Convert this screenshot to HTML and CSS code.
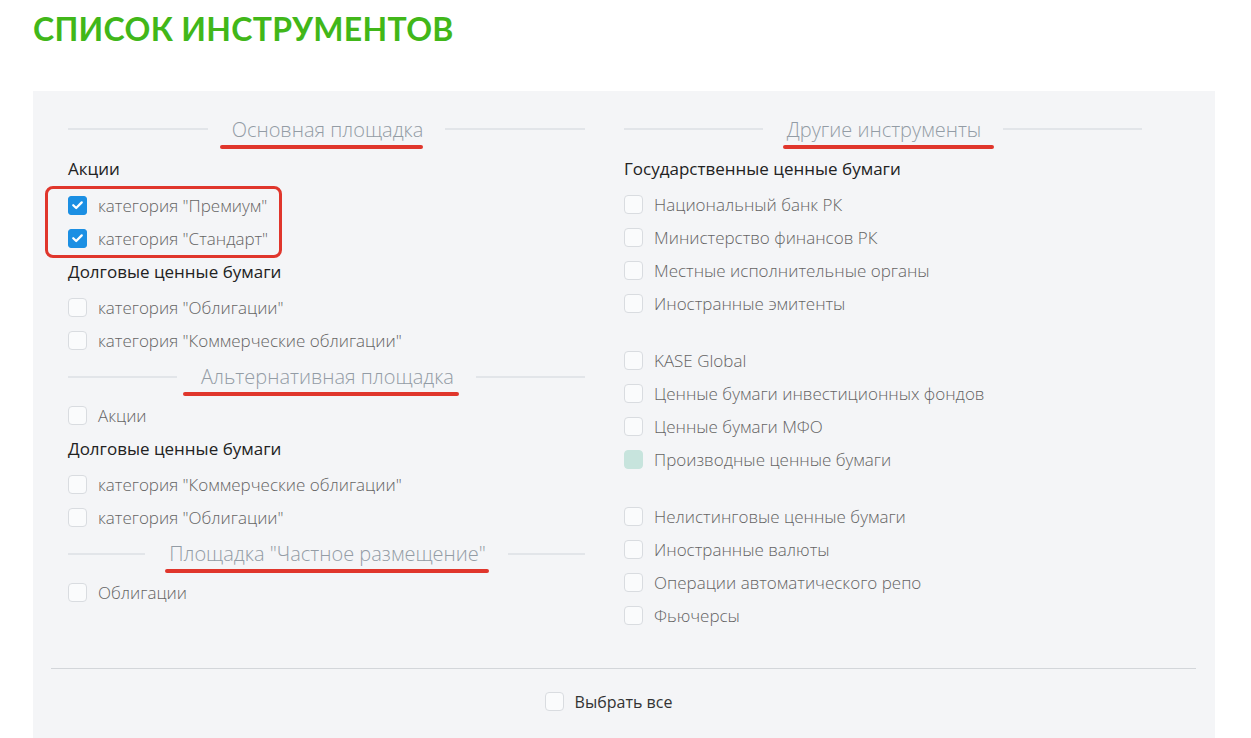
FILE: index.html
```html
<!DOCTYPE html>
<html lang="ru">
<head>
<meta charset="utf-8">
<title>Список инструментов</title>
<link rel="stylesheet" href="styles.css">
</head>
<body>
<h1 class="title">СПИСОК ИНСТРУМЕНТОВ</h1>
<div class="panel">
  <div class="columns">
    <div class="col">
      <div class="heading"><span class="line"></span><span class="htext mark-a">Основная площадка</span><span class="line"></span></div>
      <div class="label">Акции</div>
      <div class="redbox">
        <label class="item"><span class="box checked"><svg viewBox="0 0 18 18" width="18" height="18"><path d="M4.5 9.3 L7.6 12.2 L13.5 6.2" fill="none" stroke="#fff" stroke-width="2.4" stroke-linecap="round" stroke-linejoin="round"/></svg></span>категория "Премиум"</label>
        <label class="item"><span class="box checked"><svg viewBox="0 0 18 18" width="18" height="18"><path d="M4.5 9.3 L7.6 12.2 L13.5 6.2" fill="none" stroke="#fff" stroke-width="2.4" stroke-linecap="round" stroke-linejoin="round"/></svg></span>категория "Стандарт"</label>
      </div>
      <div class="label">Долговые ценные бумаги</div>
      <label class="item"><span class="box"></span>категория "Облигации"</label>
      <label class="item"><span class="box"></span>категория "Коммерческие облигации"</label>
      <div class="heading"><span class="line"></span><span class="htext mark-b">Альтернативная площадка</span><span class="line"></span></div>
      <label class="item"><span class="box"></span>Акции</label>
      <div class="label">Долговые ценные бумаги</div>
      <label class="item"><span class="box"></span>категория "Коммерческие облигации"</label>
      <label class="item"><span class="box"></span>категория "Облигации"</label>
      <div class="heading"><span class="line"></span><span class="htext mark-c">Площадка "Частное размещение"</span><span class="line"></span></div>
      <label class="item"><span class="box"></span>Облигации</label>
    </div>
    <div class="col">
      <div class="heading"><span class="line"></span><span class="htext mark-d">Другие инструменты</span><span class="line"></span></div>
      <div class="label">Государственные ценные бумаги</div>
      <label class="item"><span class="box"></span>Национальный банк РК</label>
      <label class="item"><span class="box"></span>Министерство финансов РК</label>
      <label class="item"><span class="box"></span>Местные исполнительные органы</label>
      <label class="item"><span class="box"></span>Иностранные эмитенты</label>
      <div class="group">
        <label class="item"><span class="box"></span>KASE Global</label>
        <label class="item"><span class="box"></span>Ценные бумаги инвестиционных фондов</label>
        <label class="item"><span class="box"></span>Ценные бумаги МФО</label>
        <label class="item"><span class="box disabled"></span>Производные ценные бумаги</label>
      </div>
      <div class="group">
        <label class="item"><span class="box"></span>Нелистинговые ценные бумаги</label>
        <label class="item"><span class="box"></span>Иностранные валюты</label>
        <label class="item"><span class="box"></span>Операции автоматического репо</label>
        <label class="item"><span class="box"></span>Фьючерсы</label>
      </div>
    </div>
  </div>
  <div class="divider"></div>
  <div class="selectall"><label class="item all"><span class="box"></span>Выбрать все</label></div>
</div>
</body>
</html>
```

FILE: styles.css
```css
* { box-sizing: border-box; }
html, body { margin: 0; padding: 0; background: #fff; }
body {
  font-family: "Open Sans", "Noto Sans", sans-serif;
  width: 1251px;
  height: 738px;
  overflow: hidden;
}
.title {
  margin: 0;
  padding: 9px 0 0 33px;
  height: 91px;
  font-family: Lato, sans-serif;
  font-size: 32px;
  font-weight: 700;
  color: #41b719;
  letter-spacing: 0.3px;
  line-height: 40px;
}
.panel {
  margin-left: 33px;
  width: 1182px;
  height: 647px;
  background: #f4f5f7;
  padding-top: 18px;
}
.columns {
  display: flex;
  gap: 39px;
  padding-left: 35px;
}
.col {
  width: 517px;
  display: flex;
  flex-direction: column;
}
.col + .col { width: 518px; }
.heading {
  display: flex;
  align-items: center;
  height: 40px;
  margin-bottom: 2px;
}
.line {
  flex: 1;
  height: 2px;
  background: #e2e5e9;
}
.htext {
  position: relative;
  margin: 0 22px 0 24px;
  font-size: 20px;
  font-weight: 300;
  color: #939ca5;
  white-space: nowrap;
}
.htext::after {
  content: "";
  position: absolute;
  height: 4px;
  border-radius: 2px;
  background: #e0362c;
  top: 29px;
}
.mark-a::after { left: -12px; right: 0; }
.mark-b::after { left: -18px; right: -5px; }
.mark-c::after { left: -4px; right: -3px; }
.mark-d::after { left: -4px; right: -13px; }
.label {
  height: 36px;
  display: flex;
  align-items: center;
  padding-bottom: 2px;
  font-size: 17px;
  font-weight: 500;
  color: #222;
}
.item {
  height: 33px;
  display: flex;
  align-items: center;
  font-size: 17px;
  font-weight: 300;
  color: #646464;
  white-space: nowrap;
}
.col + .col .item { position: relative; top: 1px; }
.box {
  width: 19px;
  height: 19px;
  flex: none;
  margin-right: 11px;
  border: 1px solid #d9dce0;
  border-radius: 4px;
  background: #fafbfc;
  display: flex;
  align-items: center;
  justify-content: center;
}
.box.checked {
  background: #1b8fe3;
  border-color: #1b8fe3;
  border-radius: 3px;
}
.box.disabled {
  background: #c7e4dd;
  border-color: #c7e4dd;
}
.redbox {
  align-self: flex-start;
  margin-left: -23px;
  padding: 0 11px 0 20px;
  border: 3px solid #e0362c;
  border-radius: 8px;
  margin-top: -1.5px;
  margin-bottom: -3px;
}
.group { margin-top: 24px; display: flex; flex-direction: column; }
.divider {
  margin: 37px 19px 0 18px;
  height: 1px;
  background: #d3d6da;
}
.selectall {
  display: flex;
  justify-content: center;
  padding-top: 16px;
}
.item.all {
  font-size: 16px;
  font-weight: 400;
  color: #333;
  margin-left: -31px;
}
```
